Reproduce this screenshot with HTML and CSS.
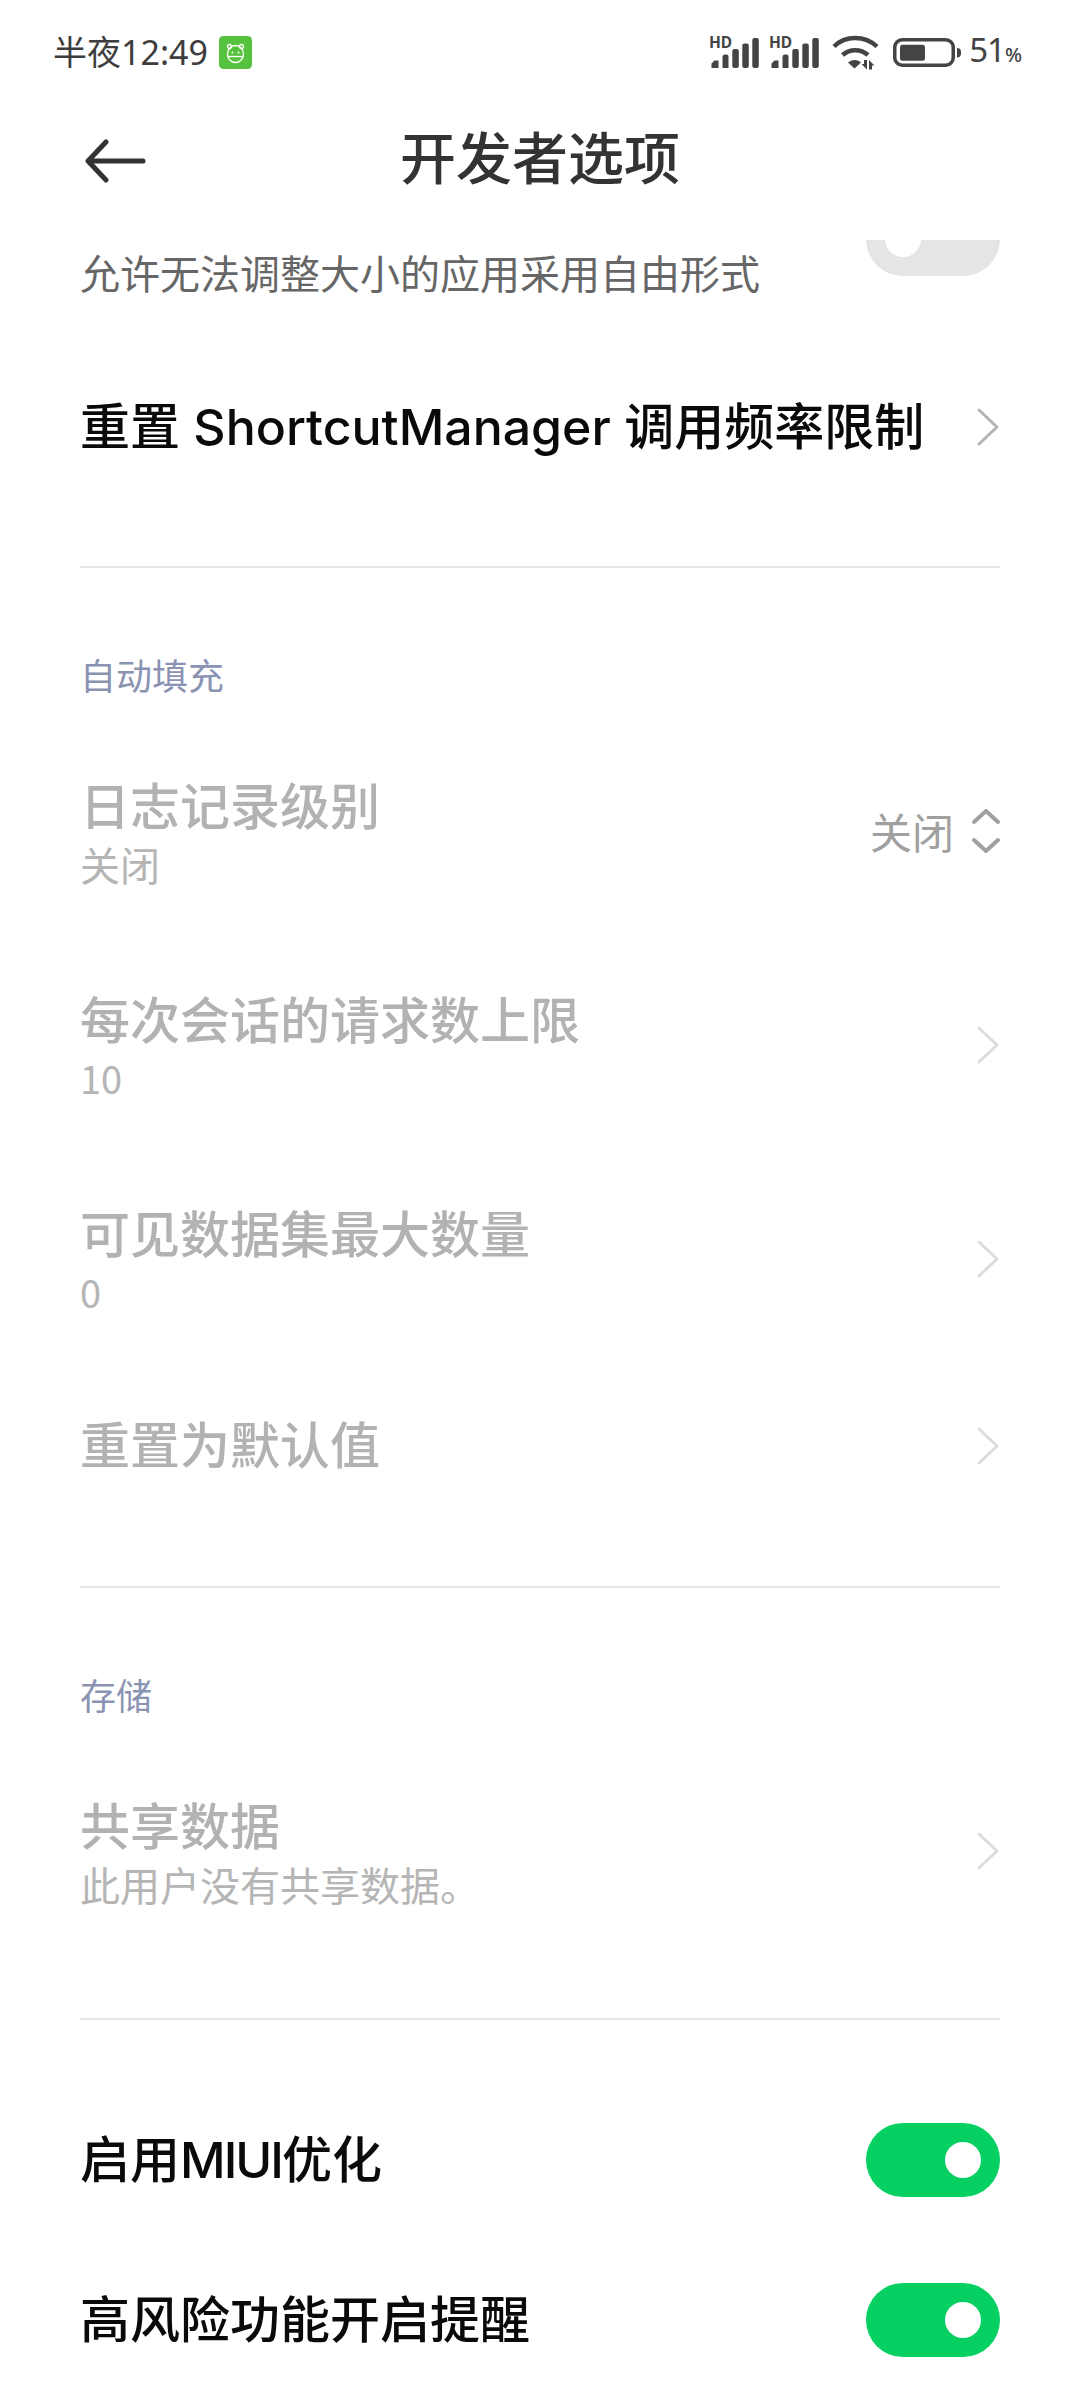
FILE: index.html
```html
<!DOCTYPE html>
<html lang="zh-CN">
<head>
<meta charset="utf-8">
<title>开发者选项</title>
<link rel="stylesheet" href="styles.css">
</head>
<body>
<div class="phone">
  <div class="status">
    <div class="status-left">
      <span class="clock">半夜12:49</span>
      <svg class="app-badge" width="33" height="33" viewBox="0 0 33 33">
        <rect width="33" height="33" rx="4.500" fill="#57c23e"/>
        <g fill="none" stroke="#fff" stroke-width="1.300">
          <ellipse cx="16.500" cy="18" rx="8" ry="8.500"/>
          <circle cx="10.500" cy="10.500" r="2"/>
          <circle cx="22.500" cy="10.500" r="2"/>
          <path d="M8.800 20.500h15.400"/>
        </g>
        <circle cx="13.500" cy="16.500" r="1" fill="#fff"/>
        <circle cx="19.500" cy="16.500" r="1" fill="#fff"/>
      </svg>
    </div>
    <div class="status-right">
      <svg class="signal" width="50" height="44" viewBox="0 0 50 44">
        <text x="0" y="18" class="hd">HD</text>
        <path d="M2.500 38v-4.500l3-3h4v7.500zM13.500 38V27a2.500 2.500 0 0 1 2.500-2.500h1.500a2 2 0 0 1 2 2V38z" fill="#444"/>
        <rect x="23.300" y="19" width="6.500" height="19" rx="2" fill="#444"/>
        <rect x="33.300" y="13.500" width="6.500" height="24.500" rx="2" fill="#444"/>
        <rect x="43.300" y="8" width="6.500" height="30" rx="2" fill="#444"/>
      </svg>
      <svg class="signal second" width="50" height="44" viewBox="0 0 50 44">
        <text x="0" y="18" class="hd">HD</text>
        <path d="M2.500 38v-4.500l3-3h4v7.500zM13.500 38V27a2.500 2.500 0 0 1 2.500-2.500h1.500a2 2 0 0 1 2 2V38z" fill="#444"/>
        <rect x="23.300" y="19" width="6.500" height="19" rx="2" fill="#444"/>
        <rect x="33.300" y="13.500" width="6.500" height="24.500" rx="2" fill="#444"/>
        <rect x="43.300" y="8" width="6.500" height="30" rx="2" fill="#444"/>
      </svg>
      <svg class="wifi" width="48" height="36" viewBox="0 0 48 36">
        <g fill="none" stroke="#444" stroke-width="4.500">
          <path d="M2 12.500C13 1 33 1 45 12.500"/>
          <path d="M10.500 21c7.500-6.500 18-6.500 25.500 0"/>
        </g>
        <path d="M16 28.500c3.500-3.500 10-3.500 13 0l-6.500 6z" fill="#444"/>
        <path d="M32 26h3v9.500l-5.500-5.500h2.500zM37 35.500V26l5.500 5.500H40v4z" fill="#444"/>
      </svg>
      <svg class="battery" width="68" height="29" viewBox="0 0 68 29">
        <rect x="1.750" y="1.750" width="58.500" height="25.500" rx="7.500" fill="none" stroke="#444" stroke-width="3.500"/>
        <rect x="7" y="6.700" width="25" height="16" rx="2.500" fill="#444"/>
        <path d="M64 10a4 4 0 0 1 4 4v1.500a4 4 0 0 1-4 4z" fill="#444"/>
      </svg>
      <span class="percent">51<small class="percent-sign">%</small></span>
    </div>
  </div>

  <header class="bar">
    <svg class="back" width="62" height="44" viewBox="0 0 62 44">
      <path d="M21 3L3 22l18 19M4 22h54" fill="none" stroke="#333" stroke-width="5" stroke-linecap="round" stroke-linejoin="round"/>
    </svg>
    <h1 class="bar-title">开发者选项</h1>
  </header>

  <main class="list">
    <div class="row-clipped">
      <span class="clipped-text">允许无法调整大小的应用采用自由形式</span>
      <span class="toggle off"><i class="knob"></i></span>
    </div>

    <div class="row row-single">
      <span class="row-title strong">重置 ShortcutManager 调用频率限制</span>
      <svg class="chev" width="24" height="40" viewBox="0 0 24 40"><path d="M3 3l18 17L3 37" fill="none" stroke="#b4b4b4" stroke-width="3" stroke-linecap="round" stroke-linejoin="round"/></svg>
    </div>

    <hr class="divider">
    <div class="section">自动填充</div>

    <div class="row row-double">
      <div class="row-text"><span class="row-title muted">日志记录级别</span><span class="row-sub">关闭</span></div>
      <div class="row-value">
        <span class="value">关闭</span>
        <svg class="updown" width="28" height="44" viewBox="0 0 28 44"><path d="M2 13L14 2l12 11M2 31l12 11 12-11" fill="none" stroke="#a0a0a0" stroke-width="4" stroke-linecap="round" stroke-linejoin="round"/></svg>
      </div>
    </div>
    <div class="row row-double">
      <div class="row-text"><span class="row-title muted">每次会话的请求数上限</span><span class="row-sub num">10</span></div>
      <svg class="chev" width="24" height="40" viewBox="0 0 24 40"><path d="M3 3l18 17L3 37" fill="none" stroke="#dcdcdc" stroke-width="3" stroke-linecap="round" stroke-linejoin="round"/></svg>
    </div>
    <div class="row row-double">
      <div class="row-text"><span class="row-title muted">可见数据集最大数量</span><span class="row-sub num">0</span></div>
      <svg class="chev" width="24" height="40" viewBox="0 0 24 40"><path d="M3 3l18 17L3 37" fill="none" stroke="#dcdcdc" stroke-width="3" stroke-linecap="round" stroke-linejoin="round"/></svg>
    </div>
    <div class="row row-single row-last">
      <span class="row-title muted">重置为默认值</span>
      <svg class="chev" width="24" height="40" viewBox="0 0 24 40"><path d="M3 3l18 17L3 37" fill="none" stroke="#dcdcdc" stroke-width="3" stroke-linecap="round" stroke-linejoin="round"/></svg>
    </div>

    <hr class="divider">
    <div class="section">存储</div>

    <div class="row row-double">
      <div class="row-text"><span class="row-title muted">共享数据</span><span class="row-sub">此用户没有共享数据。</span></div>
      <svg class="chev" width="24" height="40" viewBox="0 0 24 40"><path d="M3 3l18 17L3 37" fill="none" stroke="#dcdcdc" stroke-width="3" stroke-linecap="round" stroke-linejoin="round"/></svg>
    </div>

    <hr class="divider toggles-divider">

    <div class="row row-toggle">
      <span class="row-title strong">启用<span class="tight">MIUI</span>优化</span>
      <span class="toggle on"><i class="knob"></i></span>
    </div>
    <div class="row row-toggle">
      <span class="row-title strong">高风险功能开启提醒</span>
      <span class="toggle on"><i class="knob"></i></span>
    </div>
  </main>
</div>
</body>
</html>
```

FILE: styles.css
```css
* { box-sizing: border-box; }
html, body { margin: 0; padding: 0; background: #fff; }
body { font-family: "Noto Sans CJK SC", "Noto Sans", sans-serif; }
.phone { width: 1080px; height: 2400px; overflow: hidden; display: flex; flex-direction: column; background: #fff; }

.status { height: 104px; padding: 0 58px 0 53px; display: flex; justify-content: space-between; align-items: center; flex: none; }
.status-left { display: flex; align-items: center; gap: 11px; }
.clock { font-size: 34px; line-height: 40px; color: #3d3d3d; font-family: "Noto Sans", "Noto Sans CJK SC", sans-serif; }
.app-badge { display: block; }
.status-right { display: flex; align-items: center; }
.signal { display: block; margin-right: 10px; }
.signal.second { margin-right: 13px; }
.hd { font: 700 15.500px "Noto Sans", sans-serif; fill: #444; }
.wifi { display: block; margin-right: 13px; }
.battery { display: block; margin-right: 8px; }
.percent { font-size: 33px; line-height: 40px; color: #444; letter-spacing: -1px; font-family: "Noto Sans", sans-serif; }
.percent-sign { font-size: 20px; font-weight: 500; letter-spacing: 0; }

.bar { height: 136px; flex: none; position: relative; display: flex; align-items: center; justify-content: center; padding-bottom: 34px; }
.back { position: absolute; left: 85px; top: 35px; }
.bar-title { margin: 0; font-size: 56px; line-height: 70px; font-weight: 500; color: #333; }

.list { flex: 1; overflow: hidden; padding: 0 80px; }

.row-clipped { height: 146px; margin-top: -38px; display: flex; justify-content: space-between; align-items: flex-start; }
.clipped-text { font-size: 40px; line-height: 56px; color: #666; margin-top: 42px; }

.toggle { width: 134px; height: 74px; border-radius: 37px; display: flex; align-items: center; flex: none; padding: 0 19px; }
.toggle.off { background: #e5e5e5; justify-content: flex-start; }
.toggle.on { background: #06d062; justify-content: flex-end; }
.knob { display: block; width: 36px; height: 36px; border-radius: 50%; background: #fff; }

.row { display: flex; justify-content: space-between; align-items: center; }
.row-single { height: 158px; margin-bottom: 60px; }
.row-last { height: 160px; }
.row-double { height: 214px; }
.row-toggle { height: 160px; }
.row-text { display: flex; flex-direction: column; padding-top: 5px; }
.row-title { font-family: "Inter", "Noto Sans CJK SC", sans-serif; font-size: 50px; line-height: 64px; font-weight: 500; }
.tight { letter-spacing: -2px; }
.strong { color: #0a0a0a; }
.muted { color: #b2b2b2; }
.row-sub { font-size: 40px; line-height: 56px; color: #b5b5b5; margin-top: -3px; }
.row-sub.num { font-size: 38px; }
.row-value { display: flex; align-items: center; gap: 18px; }
.value { font-size: 42px; line-height: 50px; color: #a0a0a0; }
.chev, .updown { display: block; flex: none; }
.divider { border: 0; height: 2px; margin: 0; background: #e6e6e6; }
.toggles-divider { margin-top: 60px; margin-bottom: 60px; }
.section { height: 156px; padding-top: 81px; font-size: 36px; line-height: 50px; color: #8b93b3; }
```
